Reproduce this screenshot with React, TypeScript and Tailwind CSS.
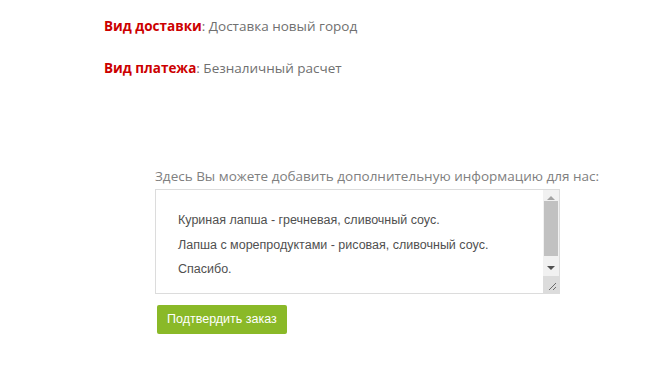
import React from 'react';

const ScrollBar: React.FC = () => (
  <div className="flex w-[16px] flex-col bg-[#f1f1f1]">
    <div className="flex h-[10px] items-center justify-center pt-[4px]">
      <svg width="8" height="5" viewBox="0 0 8 5"><path d="M0 5 L4 1 L8 5 Z" fill="#a3a3a3" /></svg>
    </div>
    <div className="mx-[1px] mt-[1px] h-[55px] bg-[#c1c1c1]" />
    <div className="flex h-[20px] items-center justify-center pt-[4px]">
      <svg width="8" height="5" viewBox="0 0 8 5"><path d="M0 0 L8 0 L4 4 Z" fill="#505050" /></svg>
    </div>
    <div className="mt-auto flex h-[17px] items-end justify-end bg-[#dcdcdc] p-[2px]">
      <svg width="10" height="10" viewBox="0 0 10 10">
        <path d="M9 2 L2 9 M9 6 L6 9" stroke="#6b6b6b" strokeWidth="1" />
      </svg>
    </div>
  </div>
);

export default function App() {
  return (
    <div className="h-[365px] w-[645px] bg-white font-['Open_Sans',sans-serif] text-[13.5px]">
      <div className="flex flex-col gap-[25px] pl-[104px] pt-[18px] text-[#707070]">
        <p className="leading-[17px]">
          <span className="font-bold text-[#cc0000]">Вид доставки</span>: Доставка новый город
        </p>
        <p className="leading-[17px]">
          <span className="font-bold text-[#cc0000]">Вид платежа</span>: Безналичный расчет
        </p>
      </div>

      <div className="ml-[155px] mt-[91px] w-[460px]">
        <label className="block leading-[17px] text-[#808080]">
          Здесь Вы можете добавить дополнительную информацию для нас:
        </label>
        <div className="mt-[4px] flex h-[105px] w-[405px] border border-[#dcdcdc] bg-white">
          <div className="flex-1 pl-[22px] pt-[18px] font-['Liberation_Sans',Arial,sans-serif] text-[12.5px] leading-[24.5px] text-[#505050]">
            <div>Куриная лапша - гречневая, сливочный соус.</div>
            <div>Лапша с морепродуктами - рисовая, сливочный соус.</div>
            <div>Спасибо.</div>
          </div>
          <ScrollBar />
        </div>
        <button className="ml-[2px] mt-[11px] h-[29px] rounded-[2px] bg-[#8ab928] px-[10px] font-['Liberation_Sans',Arial,sans-serif] text-[12.5px] text-white">
          Подтвердить заказ
        </button>
      </div>
    </div>
  );
}
